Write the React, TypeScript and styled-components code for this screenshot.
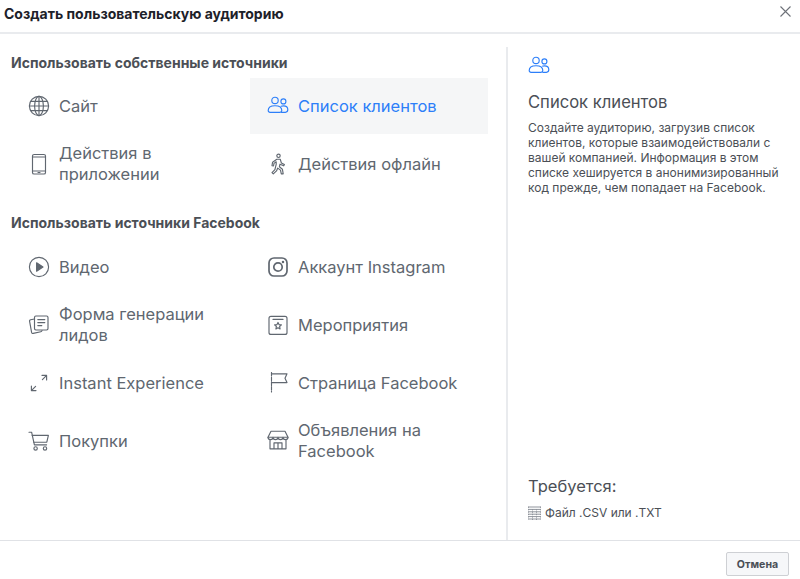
import * as React from "react";
import styled, { createGlobalStyle } from "styled-components";

const GlobalStyle = createGlobalStyle`
  html, body {
    margin: 0;
    padding: 0;
    background: #fff;
    font-family: Inter, "Liberation Sans", sans-serif;
  }
`;

const Dialog = styled.div`
  width: 800px;
  height: 579px;
  display: flex;
  flex-direction: column;
  overflow: hidden;
`;

const Header = styled.header`
  height: 32px;
  flex: none;
  display: flex;
  align-items: center;
  justify-content: space-between;
  padding: 0 9px 0 4px;
  border-bottom: 2px solid #e9ebee;
`;

const Title = styled.h1`
  margin: 0;
  font-size: 14px;
  font-weight: 700;
  color: #1d2129;
  position: relative;
  top: -3px;
`;

const CloseButton = styled.button`
  border: 0;
  background: none;
  padding: 0;
  width: 11px;
  height: 11px;
  position: relative;
  top: -5px;
  svg {
    display: block;
  }
`;

const Body = styled.div`
  flex: 1;
  display: flex;
  min-height: 0;
`;

const Sources = styled.div`
  width: 506px;
  flex: none;
  box-sizing: border-box;
  padding: 20px 18px 0 10px;
`;

const SectionTitle = styled.h2<{ $gap: number }>`
  margin: 0 0 ${(p) => p.$gap}px 1px;
  height: 17px;
  line-height: 17px;
  font-size: 14px;
  font-weight: 700;
  color: #4b4f56;
`;

const SourceGrid = styled.div`
  display: grid;
  grid-template-columns: 240px 238px;
  grid-auto-rows: 58px;
  margin-bottom: 21px;
`;

const SourceItem = styled.div<{ $active?: boolean }>`
  display: flex;
  align-items: center;
  gap: 9px;
  padding-left: 18px;
  height: ${(p) => (p.$active ? "56px" : "58px")};
  margin-top: ${(p) => (p.$active ? "1px" : "0")};
  background: ${(p) => (p.$active ? "#f5f6f7" : "transparent")};
  color: ${(p) => (p.$active ? "#2d7ff9" : "#606770")};
  font-size: 16.5px;
  line-height: 21px;
  &:nth-child(even) {
    padding-left: 17px;
  }
`;

const IconSlot = styled.span`
  width: 22px;
  height: 22px;
  flex: none;
  svg {
    display: block;
    width: 22px;
    height: 22px;
    fill: none;
    stroke: currentColor;
    stroke-width: 1.15;
    stroke-linecap: round;
    stroke-linejoin: round;
  }
`;

const Label = styled.span`
  max-width: 172px;
`;

const Details = styled.aside`
  flex: 1;
  margin-top: 13px;
  border-left: 2px solid #e9ebee;
  box-sizing: border-box;
  padding: 8px 14px 0 20px;
  display: flex;
  flex-direction: column;
`;

const DetailIcon = styled.span`
  display: block;
  width: 22px;
  height: 22px;
  color: #2d7ff9;
  svg {
    display: block;
    width: 22px;
    height: 22px;
    fill: none;
    stroke: currentColor;
    stroke-width: 1.15;
  }
`;

const DetailTitle = styled.h3`
  margin: 15px 0 0;
  font-size: 16.6px;
  line-height: 20px;
  font-weight: 400;
  color: #4b4f56;
`;

const DetailText = styled.p`
  margin: 8px 0 0;
  font-size: 12px;
  line-height: 15px;
  color: #4b4f56;
`;

const Requirements = styled.div`
  margin-top: auto;
  padding-bottom: 20px;
`;

const RequirementsTitle = styled.div`
  font-size: 16.5px;
  line-height: 20px;
  color: #4b4f56;
`;

const Requirement = styled.div`
  margin-top: 9px;
  display: flex;
  align-items: center;
  gap: 4px;
  font-size: 12px;
  line-height: 15px;
  color: #4b4f56;
  svg {
    display: block;
    flex: none;
  }
`;

const Footer = styled.footer`
  flex: none;
  border-top: 1px solid #e0e2e6;
  box-sizing: border-box;
  height: 39px;
  display: flex;
  align-items: flex-start;
  justify-content: flex-end;
  padding: 11px 11px 0 0;
`;

const CancelButton = styled.button`
  width: 63px;
  height: 24px;
  padding: 0;
  border: 1px solid #ced0d4;
  border-radius: 2px;
  background: #f6f7f9;
  color: #4b4f56;
  font-family: inherit;
  font-size: 10.6px;
  font-weight: 700;
`;

const Globe = () => (
  <svg viewBox="0 0 22 22">
    <circle cx="11" cy="11" r="9.6" />
    <ellipse cx="11" cy="11" rx="4.4" ry="9.6" />
    <path d="M11 1.4v19.2M1.4 11h19.2M2.6 6.4h16.8M2.6 15.6h16.8" />
  </svg>
);

const Phone = () => (
  <svg viewBox="0 0 22 22">
    <rect x="4.5" y="1.5" width="13" height="19.5" rx="1.6" />
    <path d="M4.5 4h13M4.5 18h13M10 19.5h2" />
  </svg>
);

const People = () => (
  <svg viewBox="0 0 22 22">
    <circle cx="8" cy="5.4" r="3.2" />
    <circle cx="16.4" cy="6.4" r="2.5" />
    <path d="M1.2 15.6c0-3.2 3-4.9 6.8-4.9s6.8 1.7 6.8 4.9c0 1.2-.8 1.7-1.8 1.7H3c-1 0-1.8-.5-1.8-1.7z" />
    <path d="M14.2 11.2c.7-.3 1.4-.4 2.2-.4 2.6 0 4.4 1.5 4.4 3.8 0 1.8-1 2.7-2.4 2.7h-4" />
  </svg>
);

const Walker = () => (
  <svg viewBox="0 0 22 22">
    <circle cx="11.5" cy="2.8" r="1.7" />
    <path d="M9.8 6.2h3.4l1.2 3.8 3 1.4-.7 1.4-3.7-1.6-.6 2.5 3 2.5.8 4.6h-1.9l-.8-3.7-2.8-2-1.2 2.8-3.2 3-1.3-1.3 2.9-2.9 1.3-5.4V8.8L7 10.4l-.5 2.6-1.5-.3.6-3.5z" />
  </svg>
);

const Play = () => (
  <svg viewBox="0 0 22 22">
    <circle cx="11" cy="11" r="9.6" />
    <path d="M8.6 6.8v8.4l6.4-4.2z" fill="currentColor" />
  </svg>
);

const LeadForm = () => (
  <svg viewBox="0 0 22 22">
    <rect x="6.5" y="2" width="13.5" height="14" rx="1.4" />
    <path d="M9.8 5.6h7M9.8 8.6h7M9.8 11.6h4" />
    <path d="M6.5 5 2.6 5.8c-.8.2-1.2.8-1 1.6l2 11c.2.8.8 1.2 1.6 1l7.6-1.6c.6-.1 1-.5 1.2-1.2" />
  </svg>
);

const Expand = () => (
  <svg viewBox="0 0 22 22">
    <path d="M14 3.4h4.6V8M18.6 3.4 14.4 7.6M8 18.6H3.4V14M3.4 18.6l4.2-4.2" />
  </svg>
);

const Cart = () => (
  <svg viewBox="0 0 22 22">
    <path d="M1 2.2h2.6l2.8 12.6h12.2" />
    <path d="M4.2 5.4h16.2l-1.6 6.8H5.8" />
    <circle cx="7.6" cy="18.4" r="1.7" />
    <circle cx="17" cy="18.4" r="1.7" />
  </svg>
);

const Instagram = () => (
  <svg viewBox="0 0 22 22">
    <g strokeWidth="1.7">
      <rect x="2" y="2" width="18" height="18" rx="5" />
      <circle cx="11" cy="11" r="4.2" />
    </g>
    <circle cx="16" cy="6" r=".7" fill="currentColor" />
  </svg>
);

const EventStar = () => (
  <svg viewBox="0 0 22 22">
    <rect x="2" y="2.4" width="18" height="18" rx="2" />
    <path d="M6 5.4h10" />
    <path d="m11 8.4 1 2.2 2.4.3-1.8 1.6.5 2.4-2.1-1.2-2.1 1.2.5-2.4-1.8-1.6 2.4-.3z" />
  </svg>
);

const Flag = () => (
  <svg viewBox="0 0 22 22">
    <path d="M4.5.5V20" strokeDasharray="3.5 1.2" />
    <path d="M4.5 1.8h15.5l-2 4.4 2 4.4H4.5" />
  </svg>
);

const Shop = () => (
  <svg viewBox="0 0 22 22">
    <path d="M4 1.2h14l3 6H1z" />
    <path d="M1 7.2c0 3.2 5 3.2 5 0 0 3.2 5 3.2 5 0 0 3.2 5 3.2 5 0 0 3.2 5 3.2 5 0" />
    <path d="M3 10.2v8.6h16v-8.6M7 18.8v-6h8v6M11 12.8v6" />
  </svg>
);

const Table = () => (
  <svg width="13" height="14" viewBox="0 0 13 14" fill="none" stroke="#90949c" strokeWidth="1">
    <path d="M.5 1h12M.5 3.4h12M.5 5.8h12M.5 8.2h12M.5 10.6h12M.5 13h12" />
    <path d="M.5.5v13M4.5 3v11M8.5 3v11M12.5.5v13" strokeDasharray="1.4 1" />
  </svg>
);

interface Source {
  label: string;
  icon: React.ReactNode;
  active?: boolean;
}

const ownSources: Source[] = [
  { label: "Сайт", icon: <Globe /> },
  { label: "Список клиентов", icon: <People />, active: true },
  { label: "Действия в приложении", icon: <Phone /> },
  { label: "Действия офлайн", icon: <Walker /> },
];

const facebookSources: Source[] = [
  { label: "Видео", icon: <Play /> },
  { label: "Аккаунт Instagram", icon: <Instagram /> },
  { label: "Форма генерации лидов", icon: <LeadForm /> },
  { label: "Мероприятия", icon: <EventStar /> },
  { label: "Instant Experience", icon: <Expand /> },
  { label: "Страница Facebook", icon: <Flag /> },
  { label: "Покупки", icon: <Cart /> },
  { label: "Объявления на Facebook", icon: <Shop /> },
];

function SourceList(props: { items: Source[] }) {
  return (
    <SourceGrid>
      {props.items.map((item) => (
        <SourceItem key={item.label} $active={item.active}>
          <IconSlot>{item.icon}</IconSlot>
          <Label>{item.label}</Label>
        </SourceItem>
      ))}
    </SourceGrid>
  );
}

export default function App() {
  return (
    <Dialog>
      <GlobalStyle />
      <Header>
        <Title>Создать пользовательскую аудиторию</Title>
        <CloseButton aria-label="Закрыть">
          <svg width="11" height="11" viewBox="0 0 11 11" stroke="#6d7178" strokeWidth="1.1">
            <path d="M.5.5l10 10M10.5.5l-10 10" />
          </svg>
        </CloseButton>
      </Header>
      <Body>
        <Sources>
          <SectionTitle $gap={6}>Использовать собственные источники</SectionTitle>
          <SourceList items={ownSources} />
          <SectionTitle $gap={7}>Использовать источники Facebook</SectionTitle>
          <SourceList items={facebookSources} />
        </Sources>
        <Details>
          <DetailIcon>
            <People />
          </DetailIcon>
          <DetailTitle>Список клиентов</DetailTitle>
          <DetailText>
            Создайте аудиторию, загрузив список клиентов, которые взаимодействовали с вашей
            компанией. Информация в этом списке хешируется в анонимизированный код прежде, чем
            попадает на Facebook.
          </DetailText>
          <Requirements>
            <RequirementsTitle>Требуется:</RequirementsTitle>
            <Requirement>
              <Table />
              Файл .CSV или .TXT
            </Requirement>
          </Requirements>
        </Details>
      </Body>
      <Footer>
        <CancelButton>Отмена</CancelButton>
      </Footer>
    </Dialog>
  );
}
